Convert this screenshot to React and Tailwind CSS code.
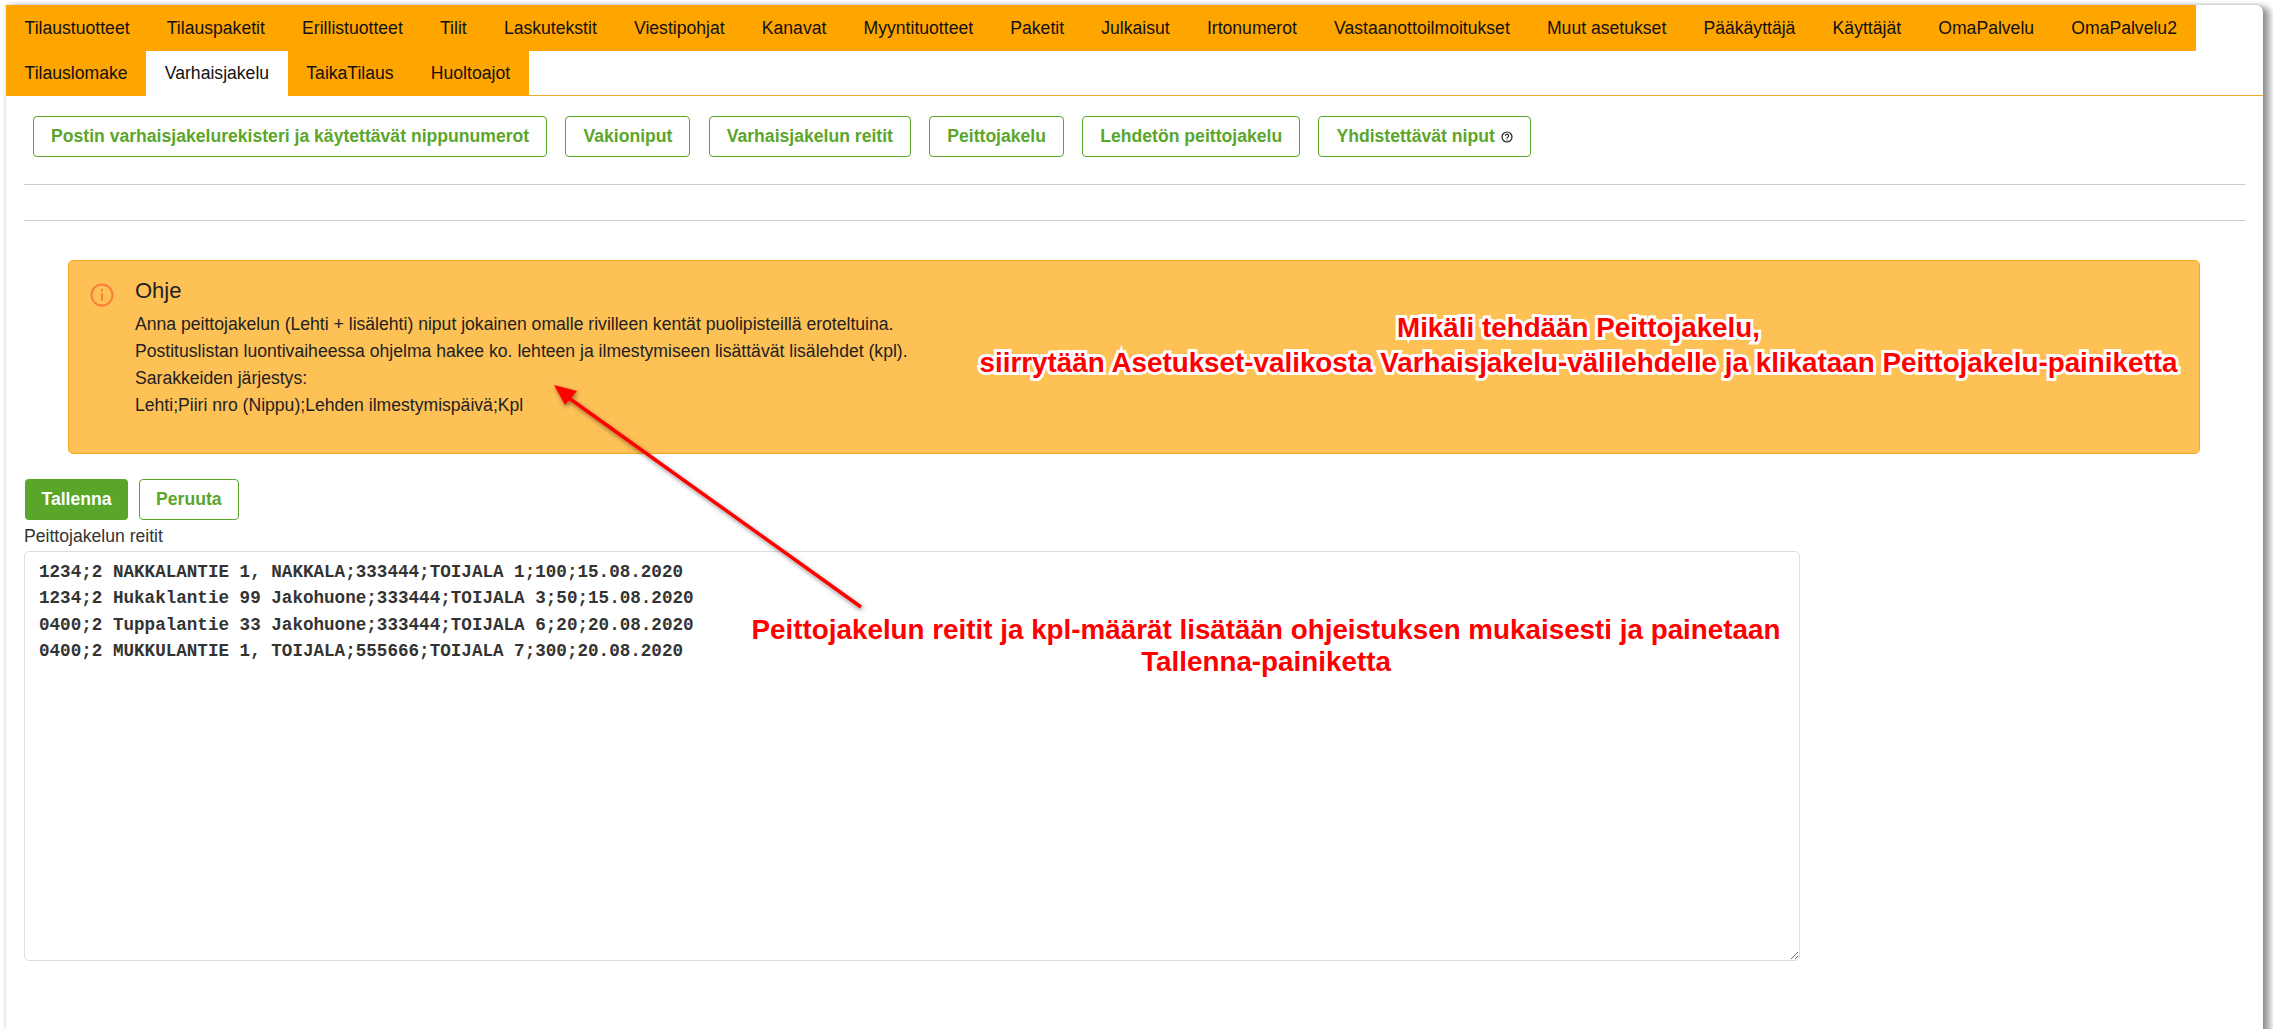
import React from "react";

/* ===== Styles ===== */
const sans = "font-['Liberation_Sans',Arial,sans-serif]";
const tabItem = "px-[18.6px] flex items-center text-[17.6px] text-[#111]";
const greenBtn =
  "h-[41px] px-[17px] flex items-center gap-[6px] rounded-[4px] border border-[#5aa62b] bg-white text-[17.6px] font-bold text-[#5aa62b]";
const outlined =
  "font-bold text-[#f00] [-webkit-text-stroke:6px_#fff] [paint-order:stroke_fill]";

const topTabs = [
  "Tilaustuotteet",
  "Tilauspaketit",
  "Erillistuotteet",
  "Tilit",
  "Laskutekstit",
  "Viestipohjat",
  "Kanavat",
  "Myyntituotteet",
  "Paketit",
  "Julkaisut",
  "Irtonumerot",
  "Vastaanottoilmoitukset",
  "Muut asetukset",
  "Pääkäyttäjä",
  "Käyttäjät",
  "OmaPalvelu",
  "OmaPalvelu2",
];

const subTabs = ["Tilauslomake", "Varhaisjakelu", "TaikaTilaus", "Huoltoajot"];

const actions = [
  "Postin varhaisjakelurekisteri ja käytettävät nippunumerot",
  "Vakioniput",
  "Varhaisjakelun reitit",
  "Peittojakelu",
  "Lehdetön peittojakelu",
];

const routes = `1234;2 NAKKALANTIE 1, NAKKALA;333444;TOIJALA 1;100;15.08.2020
1234;2 Hukaklantie 99 Jakohuone;333444;TOIJALA 3;50;15.08.2020
0400;2 Tuppalantie 33 Jakohuone;333444;TOIJALA 6;20;20.08.2020
0400;2 MUKKULANTIE 1, TOIJALA;555666;TOIJALA 7;300;20.08.2020`;

const App = () => {
  return (
    <div className={`${sans} relative h-[1029px] overflow-hidden bg-white pt-[5px] pl-[6px] pr-[10px]`}>
      <div className="h-[1040px] rounded-tr-[7px] bg-white shadow-[0_0_4px_rgba(0,0,0,0.2),7px_2px_6px_rgba(0,0,0,0.38)]">
        {/* tabs */}
        <div className="border-b border-[#f0a830] h-[91px]">
          <div className="flex h-[46px]">
            {topTabs.map((tab) => (
              <div key={tab} className={`${tabItem} bg-[#ffa500] whitespace-nowrap`}>
                {tab}
              </div>
            ))}
          </div>
          <div className="flex h-[45px]">
            {subTabs.map((tab) => (
              <div
                key={tab}
                className={
                  tab === "Varhaisjakelu"
                    ? `${tabItem} rounded-t-[3px] bg-white`
                    : `${tabItem} bg-[#ffa500]`
                }
              >
                {tab}
              </div>
            ))}
          </div>
        </div>

        <div className="pl-[18px] pr-[18px]">
          {/* action buttons */}
          <div className="flex gap-[18.3px] pl-[9px] pt-[20px]">
            {actions.map((label) => (
              <button key={label} className={greenBtn}>
                {label}
              </button>
            ))}
            <button className={greenBtn}>
              Yhdistettävät niput
              <svg width="12" height="12" viewBox="0 0 12 12" fill="none" stroke="#222" strokeWidth="1.2">
                <circle cx="6" cy="6" r="5" />
                <path d="M4.4 4.8a1.6 1.6 0 1 1 2.4 1.4c-.6.3-.8.6-.8 1.2" />
                <path d="M6 8.6v1" />
              </svg>
            </button>
          </div>
          <div className="mt-[27px] border-t border-[#ccc]" />
          <div className="mt-[35px] border-t border-[#ccc]" />

          {/* help box */}
          <div className="ml-[44px] mr-[45px] mt-[39px] flex h-[194px] rounded-[5px] border border-[#f5a623] bg-[#fec156] pl-[21px] pt-[18px]">
            <svg className="mt-[4px]" width="24" height="24" viewBox="0 0 24 24" fill="none" stroke="#fb7f3c" strokeWidth="2">
              <circle cx="12" cy="12" r="10.5" />
              <path d="M12 10.5v7" />
              <path d="M12 6v2.2" />
            </svg>
            <div className="ml-[21px] text-[#222]">
              <div className="text-[22px] leading-[24px]">Ohje</div>
              <div className="mt-[8px] text-[17.6px] leading-[27px]">
                <div>Anna peittojakelun (Lehti + lisälehti) niput jokainen omalle rivilleen kentät puolipisteillä eroteltuina.</div>
                <div>Postituslistan luontivaiheessa ohjelma hakee ko. lehteen ja ilmestymiseen lisättävät lisälehdet (kpl).</div>
                <div>Sarakkeiden järjestys:</div>
                <div>Lehti;Piiri nro (Nippu);Lehden ilmestymispäivä;Kpl</div>
              </div>
            </div>
          </div>

          {/* form */}
          <div className="mt-[25px] ml-[1px] flex gap-[11px]">
            <button className="h-[41px] px-[16.5px] rounded-[4px] bg-[#5aa62b] text-[17.6px] font-bold text-white">Tallenna</button>
            <button className="h-[41px] px-[16px] rounded-[4px] border border-[#5aa62b] bg-white text-[17.6px] font-bold text-[#5aa62b]">Peruuta</button>
          </div>
          <div className="mt-[3px] text-[17.6px] leading-[26px] text-[#333]">Peittojakelun reitit</div>
          <textarea
            readOnly
            value={routes}
            className="mt-[2px] block h-[410px] w-[1776px] rounded-[5px] border border-[#ddd] px-[14px] py-[7px] font-['Liberation_Mono','Courier_New',monospace] text-[17.6px] leading-[26.3px] font-bold text-[#333] outline-none"
          />
        </div>
      </div>

      {/* annotations drawn over the screenshot */}
      <div className={`${outlined} absolute left-[978px] top-[310px] w-[1201px] text-center text-[27.8px] leading-[35px]`}>
        <div>Mikäli tehdään Peittojakelu,</div>
        <div>siirrytään Asetukset-valikosta Varhaisjakelu-välilehdelle ja klikataan Peittojakelu-painiketta</div>
      </div>
      <div className="absolute left-[700px] top-[614px] w-[1132px] whitespace-nowrap text-center text-[27.8px] leading-[32px] font-bold text-[#f00]">
        <div>Peittojakelun reitit ja kpl-määrät lisätään ohjeistuksen mukaisesti ja painetaan</div>
        <div>Tallenna-painiketta</div>
      </div>
      <svg className="absolute left-[540px] top-[375px]" width="340" height="245" viewBox="540 375 340 245">
        <defs>
          <filter id="arrowShadow" x="-10%" y="-10%" width="120%" height="120%">
            <feDropShadow dx="1" dy="2" stdDeviation="2" floodColor="#000" floodOpacity="0.45" />
          </filter>
        </defs>
        <g filter="url(#arrowShadow)">
          <path d="M861 607 L566 396" stroke="#f00" strokeWidth="3.5" fill="none" />
          <path d="M554 385 L577 391 L565 405 Z" fill="#f00" />
        </g>
      </svg>
    </div>
  );
};

export default App;
